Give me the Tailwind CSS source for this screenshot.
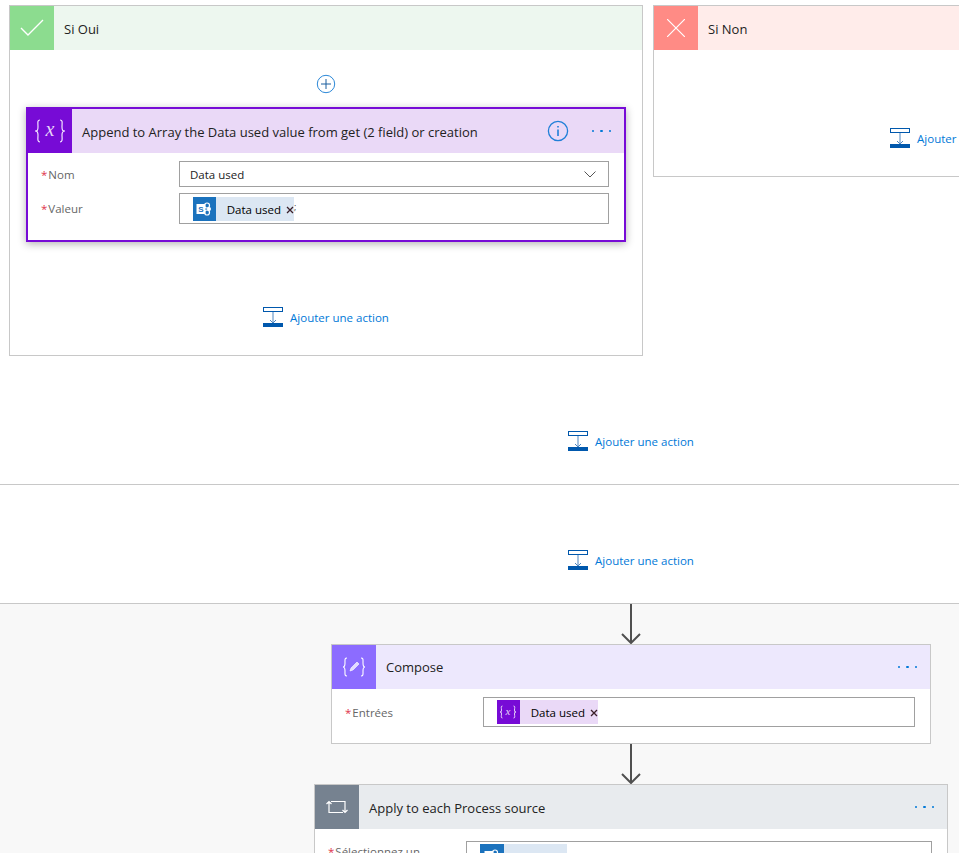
<!DOCTYPE html>
<html lang="fr">
  <head>
    <meta charset="UTF-8" />
    <title>Flow</title>
    <script src="https://cdn.jsdelivr.net/npm/@tailwindcss/browser@4"></script>
  </head>
  <body class="bg-white h-[853px] overflow-hidden font-['Open_Sans',sans-serif] text-[12.5px] text-[#222]">
    <!-- branches -->
    <section class="h-[485px] border-b border-[#c8c8c8] pt-[5px] pl-[9px] flex flex-col">
      <div class="flex gap-[10px] items-start">
        <!-- Si Oui -->
        <div class="w-[634px] h-[351px] shrink-0 border border-[#c8c8c8] flex flex-col">
          <div class="h-[44px] bg-[#edf7ef] flex items-center">
            <div class="w-[44px] h-[44px] bg-[#8cdc8f] flex items-center justify-center">
              <svg width="24" height="18" viewBox="0 0 24 18" fill="none" stroke="#fff" stroke-width="1.4"><path d="M1 9l7 7L23 1" /></svg>
            </div>
            <span class="ml-[10px] pt-[3px] text-[13px]">Si Oui</span>
          </div>
          <div class="flex justify-center mt-[24px] -ml-[1px]">
            <svg width="20" height="20" viewBox="0 0 20 20" fill="none" stroke="#2b88d8"><circle cx="10" cy="10" r="8.7" /><path d="M10 5v10M5 10h10" stroke="#1a5f9e" /></svg>
          </div>
          <!-- carte sélectionnée -->
          <div class="mt-[13px] ml-[16px] w-[600px] h-[135px] border-2 border-[#770bd6] bg-white shadow-[0_2px_8px_rgba(0,0,0,0.3)]">
            <div class="h-[44px] bg-[#ead9f7] flex items-center">
              <div class="w-[44px] h-[44px] bg-[#770bd6] flex items-center justify-center">
                <svg width="32" height="26" viewBox="0 0 32 26" fill="none" stroke="#f3e6ff" stroke-width="1.2">
                  <path d="M6 2c-3 0-2 3-2 7s-1 4-3 4c2 0 3 1 3 4s-1 7 2 7M26 2c3 0 2 3 2 7s1 4 3 4c-2 0-3 1-3 4s1 7-2 7" />
                  <text x="16" y="18" text-anchor="middle" font-family="'Liberation Serif',serif" font-style="italic" font-size="20" fill="#e6d2f8" stroke="none">x</text>
                </svg>
              </div>
              <span class="ml-[10px] pt-[3px] text-[13px] whitespace-nowrap">Append to Array the Data used value from get (2 field) or creation</span>
              <svg class="ml-auto mr-[23px]" width="22" height="22" viewBox="0 0 22 22" fill="none" stroke="#1f7fd8" stroke-width="1.3"><circle cx="11" cy="11" r="9.6" /><path d="M11 9.5v6.5" stroke-width="1.6" /><path d="M11 6v1.6" stroke-width="1.6" /></svg>
              <div class="mr-[13px] flex gap-[5.8px]">
                <span class="w-[2.5px] h-[2.5px] rounded-full bg-[#0078d7]"></span>
                <span class="w-[2.5px] h-[2.5px] rounded-full bg-[#0078d7]"></span>
                <span class="w-[2.5px] h-[2.5px] rounded-full bg-[#0078d7]"></span>
              </div>
            </div>
            <div class="pt-[8px] pl-[13px] pr-[15px] flex flex-col gap-[6px]">
              <div class="flex items-center">
                <label class="w-[138px] mt-[1px] text-[#666] text-[11.5px]"><span class="text-[#e0334c] mr-[1px]">*</span>Nom</label>
                <div class="flex-1 h-[26px] border border-[#a0a0a0] flex items-center justify-between pl-[10px] pr-[12px] text-[11.5px]">
                  <span class="pt-[2px]">Data used</span>
                  <svg width="12" height="7" viewBox="0 0 12 7" fill="none" stroke="#555"><path d="M.5.5L6 6l5.5-5.5" /></svg>
                </div>
              </div>
              <div class="flex items-center">
                <label class="w-[138px] mt-[1px] text-[#666] text-[11.5px]"><span class="text-[#e0334c] mr-[1px]">*</span>Valeur</label>
                <div class="flex-1 h-[31px] border border-[#a0a0a0] flex items-center pl-[13px] text-[11.5px]">
                  <div class="h-[24px] w-[101px] bg-[#dce7f3] flex items-center whitespace-nowrap">
                    <div class="w-[24px] h-[24px] bg-[#1b72bd] flex items-center justify-center">
                      <svg width="16" height="14" viewBox="0 0 16 14"><circle cx="11" cy="3.5" r="2.5" fill="none" stroke="#fff" stroke-width="1.2" /><circle cx="11" cy="10.5" r="2.5" fill="none" stroke="#fff" stroke-width="1.2" /><circle cx="13" cy="7" r="2" fill="#fff" /><rect x="0.5" y="2" width="9" height="10" fill="#fff" /><text x="5" y="10" text-anchor="middle" font-family="'Liberation Sans',sans-serif" font-weight="700" font-size="8" fill="#1b72bd">S</text></svg>
                    </div>
                    <span class="ml-[11px] pt-[2px] text-black">Data used</span>
                    <svg class="ml-[5px] mt-[2px] shrink-0" width="8" height="8" viewBox="0 0 8 8" stroke="#3a1f28" stroke-width="1.3"><path d="M1 1l6 6M7 1L1 7" /></svg>
                  </div>
                  <span class="text-[9px] text-[#444] -mt-[4px]">;</span>
                </div>
              </div>
            </div>
          </div>
          <div class="flex items-center justify-center gap-[7px] mt-[65px] text-[#0078d7] text-[11.5px]">
            <svg width="20" height="20" viewBox="0 0 20 20" fill="none"><rect x="0.5" y="0.5" width="19" height="4" stroke="#0058ad" /><path d="M10 5v11M7 13l3 3 3-3" stroke="#4f86c0" /><rect y="16" width="20" height="4" fill="#0058ad" /></svg>
            <span class="pt-[2px]">Ajouter une action</span>
          </div>
        </div>
        <!-- Si Non -->
        <div class="w-[600px] h-[172px] shrink-0 border border-[#c8c8c8] flex flex-col">
          <div class="h-[44px] bg-[#ffecea] flex items-center">
            <div class="w-[44px] h-[44px] bg-[#ff8b85] flex items-center justify-center">
              <svg width="18" height="18" viewBox="0 0 18 18" stroke="#fff" stroke-width="1.2"><path d="M0 0l18 18M18 0L0 18" /></svg>
            </div>
            <span class="ml-[10px] pt-[3px] text-[13px]">Si Non</span>
          </div>
          <div class="flex items-center justify-center gap-[7px] mt-[78px] text-[#0078d7] text-[11.5px]">
            <svg width="20" height="20" viewBox="0 0 20 20" fill="none"><rect x="0.5" y="0.5" width="19" height="4" stroke="#0058ad" /><path d="M10 5v11M7 13l3 3 3-3" stroke="#4f86c0" /><rect y="16" width="20" height="4" fill="#0058ad" /></svg>
            <span class="pt-[2px]">Ajouter une action</span>
          </div>
        </div>
      </div>
      <div class="flex items-center justify-center gap-[7px] mt-[75px] pl-[294px] text-[#0078d7] text-[11.5px]">
        <svg width="20" height="20" viewBox="0 0 20 20" fill="none"><rect x="0.5" y="0.5" width="19" height="4" stroke="#0058ad" /><path d="M10 5v11M7 13l3 3 3-3" stroke="#4f86c0" /><rect y="16" width="20" height="4" fill="#0058ad" /></svg>
        <span class="pt-[2px]">Ajouter une action</span>
      </div>
    </section>

    <section class="h-[119px] border-b border-[#c8c8c8] pt-[65px] pl-[303px]">
      <div class="flex items-center justify-center gap-[7px] text-[#0078d7] text-[11.5px]">
        <svg width="20" height="20" viewBox="0 0 20 20" fill="none"><rect x="0.5" y="0.5" width="19" height="4" stroke="#0058ad" /><path d="M10 5v11M7 13l3 3 3-3" stroke="#4f86c0" /><rect y="16" width="20" height="4" fill="#0058ad" /></svg>
        <span class="pt-[2px]">Ajouter une action</span>
      </div>
    </section>

    <!-- suite du flux -->
    <section class="h-[249px] bg-[#f8f8f8] pl-[303px] flex flex-col items-center">
      <svg class="shrink-0 -ml-[1px]" width="20" height="40" viewBox="0 0 20 40" fill="none" stroke="#505050" stroke-width="2"><path d="M10 0v39M1 30l9 9 9-9" /></svg>
      <div class="w-[600px] h-[100px] shrink-0 border border-[#c8c8c8] bg-white">
        <div class="h-[44px] bg-[#ede8fd] flex items-center">
          <div class="w-[44px] h-[44px] bg-[#8c6cff] flex items-center justify-center">
            <svg width="24" height="22" viewBox="0 0 24 22" fill="none" stroke="#fff" stroke-width="1.1">
              <path d="M5 2c-2.500 0-2 2-2 5s-.5 4-2 4c1.500 0 2 1 2 4s-.5 5 2 5M19 2c2.500 0 2 2 2 5s.5 4 2 4c-1.500 0-2 1-2 4s.5 5-2 5" />
              <path d="M8 15l1-3 6-6 2 2-6 6z" fill="#fff" fill-opacity="0.75" stroke-width="0.6" />
            </svg>
          </div>
          <span class="ml-[10px] pt-[2px] text-[13px]">Compose</span>
          <div class="ml-auto mr-[13px] flex gap-[5.8px]">
            <span class="w-[2.5px] h-[2.5px] rounded-full bg-[#0078d7]"></span>
            <span class="w-[2.5px] h-[2.5px] rounded-full bg-[#0078d7]"></span>
            <span class="w-[2.5px] h-[2.5px] rounded-full bg-[#0078d7]"></span>
          </div>
        </div>
        <div class="pt-[8px] pl-[13px] pr-[15px] flex items-center">
          <label class="w-[138px] mt-[2px] text-[#666] text-[11.5px]"><span class="text-[#e0334c] mr-[1px]">*</span>Entrées</label>
          <div class="flex-1 h-[30px] border border-[#a0a0a0] bg-white flex items-center pl-[13px] text-[11.5px]">
            <div class="h-[24px] w-[101px] bg-[#ead9f7] flex items-center whitespace-nowrap">
              <div class="w-[24px] h-[24px] bg-[#770bd6] flex items-center justify-center">
                <svg width="18" height="14" viewBox="0 0 18 14" fill="none" stroke="#fff" stroke-width="0.8">
                  <path d="M3.500 1C1.500 1 2.500 3 2.500 5S2 7 1 7c1 0 1.500 0 1.500 2s-1 4 1 4M14.500 1c2 0 1 2 1 4s.5 2 1.500 2c-1 0-1.500 0-1.500 2s1 4-1 4" />
                  <text x="9" y="10" text-anchor="middle" font-family="'Liberation Serif',serif" font-style="italic" font-size="11" fill="#e6d2f8" stroke="none">x</text>
                </svg>
              </div>
              <span class="ml-[11px] pt-[1px] text-black">Data used</span>
              <svg class="ml-[5px] mt-[2px] shrink-0" width="8" height="8" viewBox="0 0 8 8" stroke="#3a1f28" stroke-width="1.3"><path d="M1 1l6 6M7 1L1 7" /></svg>
            </div>
          </div>
        </div>
      </div>
      <svg class="shrink-0 -ml-[1px]" width="20" height="40" viewBox="0 0 20 40" fill="none" stroke="#505050" stroke-width="2"><path d="M10 0v39M1 30l9 9 9-9" /></svg>
      <div class="w-[634px] h-[120px] shrink-0 border border-[#c8c8c8] bg-white">
        <div class="h-[44px] bg-[#e8ebee] flex items-center">
          <div class="w-[44px] h-[44px] bg-[#768290] flex items-center justify-center">
            <svg width="22" height="18" viewBox="0 0 22 18" fill="none" stroke="#fff" stroke-width="1.2"><path d="M.5 6l2.500-2.500L5.500 6M3 4v10.500h14M21.500 12L19 14.500 16.500 12M19 14V3.500H5" /></svg>
          </div>
          <span class="ml-[10px] pt-[3px] text-[13px]">Apply to each Process source</span>
          <div class="ml-auto mr-[13px] flex gap-[5.8px]">
            <span class="w-[2.5px] h-[2.5px] rounded-full bg-[#0078d7]"></span>
            <span class="w-[2.5px] h-[2.5px] rounded-full bg-[#0078d7]"></span>
            <span class="w-[2.5px] h-[2.5px] rounded-full bg-[#0078d7]"></span>
          </div>
        </div>
        <div class="pt-[12px] pl-[13px] pr-[15px] flex items-start">
          <label class="w-[138px] text-[#666] text-[11.5px] mt-[2px] whitespace-nowrap"><span class="text-[#e0334c] mr-[1px]">*</span>Sélectionnez un</label>
          <div class="flex-1 h-[40px] border border-[#a0a0a0] bg-white pl-[13px] pt-[2px]">
            <div class="h-[24px] w-[87px] bg-[#dce7f3] flex items-center">
              <div class="w-[24px] h-[24px] bg-[#1b72bd] flex items-center justify-center">
                <svg width="16" height="14" viewBox="0 0 16 14"><circle cx="11" cy="3.5" r="2.5" fill="none" stroke="#fff" stroke-width="1.2" /><rect x="0.5" y="2" width="9" height="10" fill="#fff" /></svg>
              </div>
            </div>
          </div>
        </div>
      </div>
    </section>
  </body>
</html>
